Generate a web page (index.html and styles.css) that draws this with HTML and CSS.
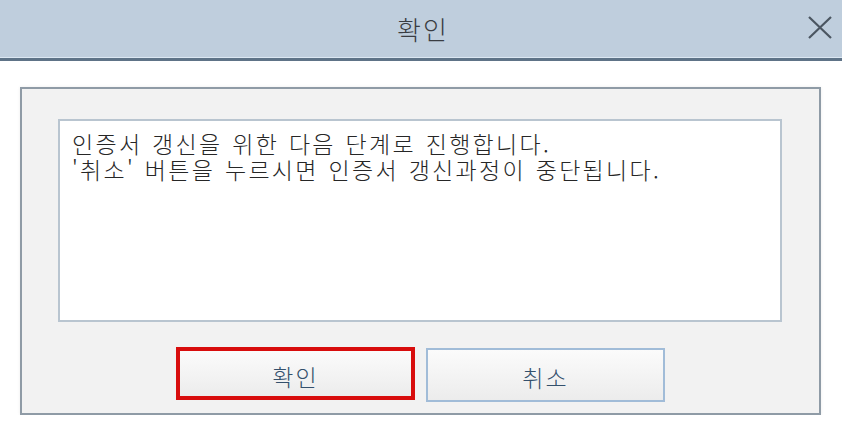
FILE: index.html
```html
<!DOCTYPE html>
<html lang="ko">
<head>
<meta charset="utf-8">
<title>확인</title>
<link rel="stylesheet" href="styles.css">
</head>
<body>
<div class="titlebar">
  <span class="title">확인</span>
  <span class="close" aria-label="닫기">
    <svg width="26" height="23" viewBox="0 0 26 23"><path d="M2 1 L24 22 M24 1 L2 22" stroke="#4b5661" stroke-width="2.2" fill="none"/></svg>
  </span>
</div>
<div class="content">
  <div class="panel">
    <div class="message">
      <p>인증서 갱신을 위한 다음 단계로 진행합니다.</p>
      <p>'취소' 버튼을 누르시면 인증서 갱신과정이 중단됩니다.</p>
    </div>
    <div class="buttons">
      <button class="btn btn-ok">확인</button>
      <button class="btn btn-cancel">취소</button>
    </div>
  </div>
</div>
</body>
</html>
```
FILE: styles.css
```css
html, body {
  margin: 0;
  padding: 0;
  background: #ffffff;
  font-family: "Noto Sans CJK KR", "Noto Sans", sans-serif;
}
.titlebar {
  position: relative;
  height: 57px;
  background: #bfcedd;
  border-bottom: 1px solid #dbe7f2;
  box-shadow: 0 3px 0 #5e7387;
  display: flex;
  align-items: center;
  justify-content: center;
}
.title {
  font-size: 26px;
  font-weight: 300;
  color: #3a3d42;
  letter-spacing: 2px;
  line-height: 1;
  padding-left: 4px;
}
.close {
  position: absolute;
  right: 9px;
  top: 16px;
  display: block;
  line-height: 0;
}
.content {
  padding: 29px 0 0 20px;
}
.panel {
  box-sizing: border-box;
  width: 801px;
  height: 328px;
  border: 2px solid #8f9ba6;
  background: #f2f2f2;
  box-shadow: 0 0 3px rgba(0,0,0,0.08);
  padding: 30px 37px 0 36px;
  display: flex;
  flex-direction: column;
}
.message {
  box-sizing: border-box;
  height: 203px;
  border: 2px solid #b9c5d0;
  background: #ffffff;
  padding: 9px 12px;
  color: #262626;
  font-size: 23px;
  font-weight: 300;
  line-height: 26px;
  letter-spacing: 2.3px;
  word-spacing: 1px;
}
.message p {
  margin: 0;
}
.buttons {
  display: flex;
  justify-content: center;
  gap: 11px;
  margin-top: 25px;
  padding-left: 1px;
}
.btn {
  box-sizing: border-box;
  width: 239px;
  height: 53px;
  font-family: inherit;
  font-size: 23px;
  font-weight: 300;
  color: #34506c;
  letter-spacing: 2px;
  background: linear-gradient(#fbfbfb, #ececec);
  padding: 4px 0 0 0;
  cursor: pointer;
}
.btn-ok {
  border: 4px solid #d80d0d;
}
.btn-cancel {
  border: 2px solid #a1bcd8;
  height: 54px;
  margin-top: 1px;
}
```
